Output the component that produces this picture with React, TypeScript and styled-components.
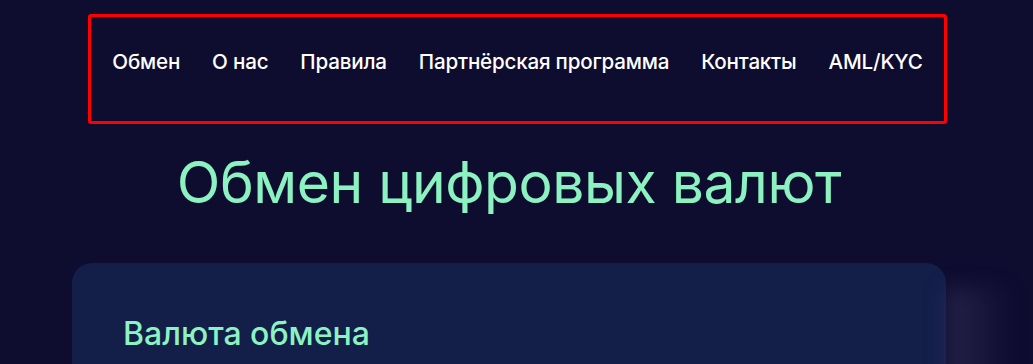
import styled, { createGlobalStyle } from 'styled-components';

const GlobalStyle = createGlobalStyle`
  html, body {
    margin: 0;
    padding: 0;
    background: #0e0c2f;
    overflow: hidden;
  }

  body {
    font-family: Inter, 'Noto Sans', sans-serif;
  }
`;

const Page = styled.div`
  height: 364px;
  display: flex;
  flex-direction: column;
  align-items: center;
  padding-top: 14px;
  background: #0e0c2f;

  & > * {
    flex-shrink: 0;
  }
`;

const Nav = styled.nav`
  box-sizing: border-box;
  width: 859px;
  height: 110px;
  margin-left: 2px;
  padding-bottom: 16px;
  display: flex;
  align-items: center;
  justify-content: center;
  gap: 32px;
  border: 3px solid #ff0000;
  border-radius: 3px;
`;

const NavLink = styled.a`
  color: #ffffff;
  font-size: 20.6px;
  font-weight: 500;
  text-decoration: none;
  letter-spacing: -0.2px;
`;

const Main = styled.main`
  width: 874px;
  margin-right: 15px;
  display: flex;
  flex-direction: column;
  align-items: center;
`;

const Title = styled.h1`
  margin: 26px 0 0;
  color: #8cf2c2;
  font-size: 57px;
  font-weight: 400;
  line-height: 66px;
  letter-spacing: -0.45px;
`;

const Card = styled.section`
  position: relative;
  box-sizing: border-box;
  width: 100%;
  height: 200px;
  margin-top: 47px;
  padding: 51px 51px;
  border-radius: 20px;
  background: #131e49;

  &::after {
    content: '';
    position: absolute;
    top: 24px;
    right: -68px;
    width: 68px;
    height: 200px;
    background: linear-gradient(90deg, rgba(62, 57, 102, 0.5), rgba(20, 18, 55, 0));
    filter: blur(10px);
  }
`;

const CardTitle = styled.h2`
  margin: 0;
  color: #8cf2c2;
  font-size: 32px;
  font-weight: 500;
  letter-spacing: 0;
`;

const links = ['Обмен', 'О нас', 'Правила', 'Партнёрская программа', 'Контакты', 'AML/KYC'];

export default function App() {
  return (
    <>
      <GlobalStyle />
      <Page>
        <Nav>
          {links.map((l) => (
            <NavLink key={l} href="#">
              {l}
            </NavLink>
          ))}
        </Nav>
        <Main>
          <Title>Обмен цифровых валют</Title>
          <Card>
            <CardTitle>Валюта обмена</CardTitle>
          </Card>
        </Main>
      </Page>
    </>
  );
}
